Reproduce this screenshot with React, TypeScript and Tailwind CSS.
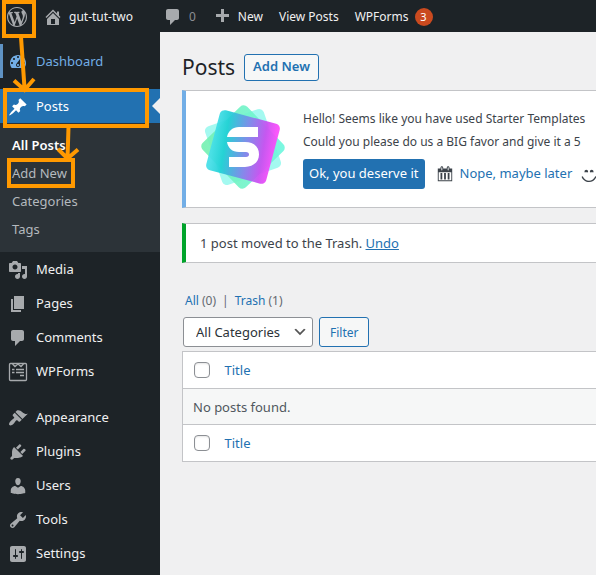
import type { ReactNode } from "react";

const paths = {
  wordpress:
    "M20 10c0-5.51-4.49-10-10-10C4.48 0 0 4.49 0 10c0 5.52 4.48 10 10 10 5.51 0 10-4.48 10-10zM7.78 15.37L4.37 6.22c.55-.02 1.17-.08 1.17-.08.5-.06.44-1.13-.06-1.11 0 0-1.45.11-2.37.11-.18 0-.37 0-.58-.01C4.12 2.69 6.87 1.11 10 1.11c2.33 0 4.45.87 6.05 2.34-.68-.11-1.65.39-1.65 1.58 0 .74.45 1.36.9 2.1.35.61.55 1.36.55 2.46 0 1.49-1.4 5-1.4 5l-3.03-8.37c.54-.02.82-.17.82-.17.5-.05.44-1.25-.06-1.22 0 0-1.44.12-2.38.12-.87 0-2.33-.12-2.33-.12-.5-.03-.56 1.2-.06 1.22l.92.08 1.26 3.41zM17.41 10c.24-.64.74-1.87.43-4.25.7 1.29 1.05 2.71 1.05 4.25 0 3.29-1.73 6.24-4.4 7.78.97-2.59 1.94-5.2 2.92-7.78zM6.1 18.09C3.12 16.65 1.11 13.53 1.11 10c0-1.3.23-2.48.72-3.59C3.25 10.3 4.67 14.2 6.1 18.09zm4.03-6.63l2.58 6.98c-.86.29-1.76.45-2.71.45-.79 0-1.57-.11-2.29-.33.81-2.38 1.62-4.74 2.42-7.1z",
  home: "M16 8.5l1.53 1.53-1.06 1.06L10 4.6l-6.47 6.49-1.06-1.06L10 2.5l4 4v-2h2v4zm-6-2.46l6 5.99V18H4v-5.97zM12 17v-5H8v5h4z",
  comments:
    "M5 2h9c1.1 0 2 .9 2 2v7c0 1.1-.9 2-2 2h-2l-5 5v-5H5c-1.1 0-2-.9-2-2V4c0-1.1.9-2 2-2z",
  plus: "M17 7v3h-5v5H9v-5H4V7h5V2h3v5h5z",
  dashboard:
    "M3.76 16h12.48c1.1-1.37 1.76-3.11 1.76-5 0-4.42-3.58-8-8-8s-8 3.58-8 8c0 1.89.66 3.63 1.76 5zM10 4c.55 0 1 .45 1 1s-.45 1-1 1-1-.45-1-1 .45-1 1-1zM6 6c.55 0 1 .45 1 1s-.45 1-1 1-1-.45-1-1 .45-1 1-1zm8 0c.55 0 1 .45 1 1s-.45 1-1 1-1-.45-1-1 .45-1 1-1zm-5.37 5.55L12 7v6c0 1.1-.9 2-2 2s-2-.9-2-2c0-.57.24-1.08.63-1.45zM4 10c.55 0 1 .45 1 1s-.45 1-1 1-1-.45-1-1 .45-1 1-1zm12 0c.55 0 1 .45 1 1s-.45 1-1 1-1-.45-1-1 .45-1 1-1zm-5 3c0-.55-.45-1-1-1s-1 .45-1 1 .45 1 1 1 1-.45 1-1z",
  post: "M10.44 3.02l1.82-1.82 6.36 6.35-1.83 1.82c-1.05-.68-2.48-.57-3.41.36l-.75.75c-.92.93-1.04 2.35-.35 3.41l-1.83 1.82-2.41-2.41-2.8 2.79c-.42.42-3.38 2.71-3.8 2.29s1.86-3.39 2.28-3.81l2.79-2.79L4.1 9.36l1.83-1.82c1.05.69 2.48.57 3.4-.36l.75-.75c.93-.92 1.05-2.35.36-3.41z",
  media:
    "M13 11V4c0-.55-.45-1-1-1h-1.67L9 1H5L3.67 3H2c-.55 0-1 .45-1 1v7c0 .55.45 1 1 1h10c.55 0 1-.45 1-1zM7 4.5c1.38 0 2.5 1.12 2.5 2.5S8.38 9.5 7 9.5 4.5 8.38 4.5 7 5.62 4.5 7 4.5zM14 6h5v10.5c0 1.38-1.12 2.5-2.5 2.5S14 17.88 14 16.5s1.12-2.5 2.5-2.5c.17 0 .34.02.5.05V9h-3V6zm-4 8.05V13h2v3.5c0 1.38-1.12 2.5-2.5 2.5S7 17.88 7 16.5 8.12 14 9.5 14c.17 0 .34.02.5.05z",
  page: "M6 15V2h10v13H6zm-1 1h8v2H3V5h2v11z",
  appearance:
    "M14.48 11.06L7.41 3.99l1.5-1.5c.5-.56 2.3-.47 3.51.32 1.21.8 1.43 1.28 2.91 2.1 1.18.64 2.45 1.26 4.45.85zm-.71.71L6.7 4.7 4.93 6.47c-.39.39-.39 1.02 0 1.41l1.06 1.06c.39.39.39 1.03 0 1.42-.6.6-1.43 1.11-2.21 1.69-.35.26-.7.53-1.01.84C1.43 14.23.4 16.08 1.4 17.07c.99 1 2.84-.03 4.18-1.36.31-.31.58-.66.85-1.02.57-.78 1.08-1.61 1.69-2.21.39-.39 1.02-.39 1.41 0l1.06 1.06c.39.39 1.02.39 1.41 0z",
  plugins:
    "M13.11 4.36L9.87 7.6 8 5.73l3.24-3.24c.35-.34 1.05-.2 1.56.32.52.51.66 1.21.31 1.55zm-8 1.77l.91-1.12 9.01 9.01-1.19.84c-.71.71-2.63 1.16-3.82 1.16H6.14L4.9 17.26c-.59.59-1.54.59-2.12 0-.59-.58-.59-1.53 0-2.12l1.24-1.24v-3.88c0-1.13.4-3.19 1.09-3.89zm7.26 3.97l3.24-3.24c.34-.35 1.04-.21 1.55.31.52.51.66 1.21.31 1.55l-3.24 3.25z",
  users:
    "M10 9.25c-2.27 0-2.73-3.44-2.73-3.44C7 4.02 7.82 2 9.97 2c2.16 0 2.98 2.02 2.71 3.81 0 0-.41 3.44-2.68 3.44zm0 2.57L12.72 10c2.39 0 4.52 2.33 4.52 4.53v2.49s-3.65 1.13-7.24 1.13c-3.65 0-7.24-1.13-7.24-1.13v-2.49c0-2.25 1.94-4.48 4.47-4.48z",
  tools:
    "M16.68 9.77c-1.34 1.34-3.3 1.67-4.95.99l-5.41 6.52c-.99.99-2.59.99-3.58 0s-.99-2.59 0-3.57l6.52-5.42c-.68-1.65-.35-3.61.99-4.95 1.28-1.28 3.12-1.62 4.72-1.06l-2.89 2.89 2.82 2.82 2.86-2.87c.53 1.58.18 3.39-1.08 4.65zM3.81 16.21c.4.39 1.04.39 1.43 0 .4-.4.4-1.04 0-1.43-.39-.4-1.03-.4-1.43 0-.39.39-.39 1.03 0 1.43z",
  settings:
    "M18 16V4c0-1.1-.9-2-2-2H4c-1.1 0-2 .9-2 2v12c0 1.1.9 2 2 2h12c1.1 0 2-.9 2-2zM8 11h1c.55 0 1 .45 1 1s-.45 1-1 1H8v1.5c0 .28-.22.5-.5.5s-.5-.22-.5-.5V13H6c-.55 0-1-.45-1-1s.45-1 1-1h1V5.5c0-.28.22-.5.5-.5s.5.22.5.5V11zm5-2h-1c-.55 0-1-.45-1-1s.45-1 1-1h1V5.5c0-.28.22-.5.5-.5s.5.22.5.5V7h1c.55 0 1 .45 1 1s-.45 1-1 1h-1v5.5c0 .28-.22.5-.5.5s-.5-.22-.5-.5V9z",
  calendar:
    "M15 4h3v14H2V4h3V3c0-.83.67-1.5 1.5-1.5S8 2.17 8 3v1h4V3c0-.83.67-1.5 1.5-1.5S15 2.17 15 3v1zM6 3v2.5c0 .28.22.5.5.5s.5-.22.5-.5V3c0-.28-.22-.5-.5-.5S6 2.72 6 3zm7 0v2.5c0 .28.22.5.5.5s.5-.22.5-.5V3c0-.28-.22-.5-.5-.5s-.5.22-.5.5zm4 14V8H3v9h14zM7 16V9H5v7h2zm4 0V9H9v7h2zm4 0V9h-2v7h2z",
  smiley:
    "M7 5.2c1.1 0 2 .89 2 2 0 .37-.11.71-.28 1C8.72 8.2 8 8 7 8s-1.72.2-1.72.2c-.17-.29-.28-.63-.28-1 0-1.11.9-2 2-2zm6 0c1.11 0 2 .89 2 2 0 .37-.11.71-.28 1 0 0-.72-.2-1.72-.2s-1.72.2-1.72.2c-.17-.29-.28-.63-.28-1 0-1.11.89-2 2-2zm-3 13.7c3.72 0 7.03-2.36 8.23-5.88l-1.32-.46C15.9 15.52 13.12 17.5 10 17.5s-5.9-1.98-6.91-4.94l-1.32.46c1.2 3.52 4.51 5.88 8.23 5.88z",
};

type IconName = keyof typeof paths;

function Icon({ name, className = "size-5" }: { name: IconName; className?: string }) {
  return (
    <svg viewBox="0 0 20 20" className={`shrink-0 ${className}`} fill="currentColor" fillRule="evenodd" aria-hidden="true">
      <path d={paths[name]} />
    </svg>
  );
}

function FormsIcon() {
  return (
    <svg viewBox="0 0 20 20" className="size-5 shrink-0" fill="none" stroke="currentColor" aria-hidden="true">
      <rect x="1.5" y="1.5" width="17" height="17" rx="1" strokeWidth="1.3" />
      <path d="M4.5 2 7 4.5 10 2l3 2.5L15.5 2" strokeWidth="1.3" />
      <path d="M4 7.5h2.5M8 7.5h8M4 10.5h2.5M8 10.5h8M12 13.5h4" strokeWidth="1.4" />
    </svg>
  );
}

function MenuItem({ icon, label }: { icon: ReactNode; label: string }) {
  return (
    <a href="#" className="flex h-[34px] items-center gap-2 pt-[2px] pl-2 text-[#f0f0f1]">
      <span className="text-[#a7aaad]">{icon}</span>
      {label}
    </a>
  );
}

function AdminBar() {
  return (
    <header className="flex h-8 items-center overflow-hidden bg-[#1d2327] pt-[2px] pl-[7px] text-[12px] whitespace-nowrap text-[#f0f0f1]">
      <a href="#" aria-label="About WordPress" className="text-[#a7aaad]">
        <Icon name="wordpress" />
      </a>
      <a href="#" className="ml-4 flex items-center gap-[6px]">
        <Icon name="home" className="size-5 text-[#a7aaad]" />
        gut-tut-two
      </a>
      <a href="#" className="ml-[30px] flex items-center gap-[6px] text-[#8c8f94]">
        <Icon name="comments" className="size-5 text-[#a7aaad]" />0
      </a>
      <a href="#" className="ml-4 flex items-center gap-[6px]">
        <Icon name="plus" className="size-5 text-[#a7aaad]" />
        New
      </a>
      <a href="#" className="ml-4">View Posts</a>
      <a href="#" className="ml-4 flex items-center gap-[6px]">
        WPForms
        <span className="flex size-[18px] items-center justify-center rounded-full bg-[#ca4a1f] text-[11px] text-white">3</span>
      </a>
    </header>
  );
}

function Sidebar() {
  return (
    <nav aria-label="Main menu" className="w-40 shrink-0 bg-[#1d2327] pt-3 text-[13px]">
      <a href="#" className="flex h-[34px] items-center gap-2 pt-[2px] pl-2 text-[#72aee6] shadow-[inset_3px_0_0_#5f93c4]">
        <Icon name="dashboard" />
        Dashboard
      </a>
      <a href="#" className="relative mt-[11px] flex h-[34px] items-center gap-2 bg-[#2271b1] pt-[2px] pl-2 text-white">
        <Icon name="post" />
        Posts
        <span className="absolute top-[9px] right-0 border-y-8 border-r-8 border-y-transparent border-r-[#f0f0f1]" />
      </a>
      <ul className="bg-[#2c3338] pt-2 pb-[9px] leading-7 text-[#b4b9be]">
        <li className="pl-3 font-semibold text-white"><a href="#">All Posts</a></li>
        <li className="pl-3"><a href="#">Add New</a></li>
        <li className="pl-3"><a href="#">Categories</a></li>
        <li className="pl-3"><a href="#">Tags</a></li>
      </ul>
      <MenuItem icon={<Icon name="media" />} label="Media" />
      <MenuItem icon={<Icon name="page" />} label="Pages" />
      <MenuItem icon={<Icon name="comments" />} label="Comments" />
      <MenuItem icon={<FormsIcon />} label="WPForms" />
      <div className="h-3" />
      <MenuItem icon={<Icon name="appearance" />} label="Appearance" />
      <MenuItem icon={<Icon name="plugins" />} label="Plugins" />
      <MenuItem icon={<Icon name="users" />} label="Users" />
      <MenuItem icon={<Icon name="tools" />} label="Tools" />
      <MenuItem icon={<Icon name="settings" />} label="Settings" />
    </nav>
  );
}

function StarterLogo() {
  return (
    <svg viewBox="0 0 84 84" className="size-[84px] shrink-0" role="img" aria-label="Starter Templates">
      <defs>
        <linearGradient id="front" x1="0" y1="0.5" x2="1" y2="0.4">
          <stop offset="0" stopColor="#46dfe8" />
          <stop offset="0.2" stopColor="#1fd0d6" />
          <stop offset="0.55" stopColor="#8383ec" />
          <stop offset="0.82" stopColor="#cb4cf2" />
          <stop offset="1" stopColor="#fb4bfb" />
        </linearGradient>
        <linearGradient id="back" x1="0" y1="1" x2="1" y2="0">
          <stop offset="0" stopColor="#74f0ae" />
          <stop offset="1" stopColor="#6cf7e0" />
        </linearGradient>
      </defs>
      <rect x="11" y="11" width="62" height="62" rx="5" fill="#7df7ea" opacity="0.7" transform="rotate(-19 42 42)" />
      <rect x="11" y="11" width="62" height="62" rx="5" fill="url(#back)" opacity="0.9" transform="rotate(46 42 42)" />
      <rect x="11" y="11" width="62" height="62" rx="5" fill="url(#front)" opacity="0.93" transform="rotate(15 42 42)" />
      <path d="M57 22H38c-6 0-11 4-12 10h31z" fill="#fff" />
      <path d="M26 37h18c9 0 14 5 14 12.500S52 62 44 62H28V52h17c4 0 4-5 0-5h-7c-7 0-11-4-12-10z" fill="#fff" />
    </svg>
  );
}

function TitleRow({ label }: { label: string }) {
  return (
    <tr className="h-[37px] bg-white">
      <td className="w-8 pl-[11px]">
        <input
          type="checkbox"
          aria-label={label}
          className="block size-4 appearance-none rounded-[4px] border border-[#8c8f94] bg-white shadow-[inset_0_1px_2px_rgba(0,0,0,0.1)]"
        />
      </td>
      <th scope="col" className="pt-[2px] pl-[10px] text-left font-normal">
        <a href="#" className="text-[#2271b1]">Title</a>
      </th>
    </tr>
  );
}

function Content() {
  return (
    <main className="min-w-0 flex-1 overflow-hidden bg-[#f0f0f1] pt-5 pl-[22px] text-[13px] text-[#3c434a]">
      <div className="flex items-center gap-[9px]">
        <h1 className="text-[21px] leading-[30px] text-[#1d2327]">Posts</h1>
        <button className="h-[27px] rounded-[3px] border border-[#2271b1] bg-[#f6f7f7] px-2 font-semibold text-[#2271b1]">
          Add New
        </button>
      </div>

      <section className="mt-2 flex h-[118px] items-start border border-r-0 border-l-4 border-[#c3c4c7] border-l-[#72aee6] bg-white pt-[14px] pl-[15px] whitespace-nowrap">
        <StarterLogo />
        <div className="ml-[18px] pt-[2px]">
          <p className="text-[12px] leading-[23px]">Hello! Seems like you have used Starter Templates</p>
          <p className="text-[12px] leading-[23px]">Could you please do us a BIG favor and give it a 5</p>
          <div className="mt-[6px] flex items-center">
            <button className="h-[30px] rounded-[3px] bg-[#2271b1] px-[6px] text-white">Ok, you deserve it</button>
            <Icon name="calendar" className="ml-[11px] size-[18px]" />
            <a href="#" className="ml-[6px] text-[#2271b1]">Nope, maybe later</a>
            <Icon name="smiley" className="ml-2 size-[18px]" />
          </div>
        </div>
      </section>

      <section className="mt-[15px] flex h-10 items-center border border-r-0 border-l-4 border-[#c3c4c7] border-l-[#00a32a] bg-white pt-[2px] pl-[14px]">
        <p>
          1 post moved to the Trash. <a href="#" className="text-[#2271b1] underline">Undo</a>
        </p>
      </section>

      <div className="mt-7 flex gap-[6px] pl-[3px] text-[12px] leading-5 text-[#646970]">
        <span><a href="#" className="text-[#2271b1]">All</a> (0)</span>
        <span>|</span>
        <span><a href="#" className="text-[#2271b1]">Trash</a> (1)</span>
      </div>

      <div className="mt-[6px] flex gap-[6px] pl-px">
        <div className="relative">
          <select
            aria-label="Filter by category"
            className="h-[30px] w-[130px] appearance-none rounded-[3px] border border-[#8c8f94] bg-white pt-[2px] pl-3 text-[13px] text-[#2c3338]"
          >
            <option>All Categories</option>
          </select>
          <svg viewBox="0 0 20 20" className="pointer-events-none absolute top-[7px] right-[5px] size-4" fill="#555" aria-hidden="true">
            <path d="M5 6l5 5 5-5 2 1-7 7-7-7 2-1z" />
          </svg>
        </div>
        <button className="h-[30px] rounded-[3px] border border-[#2271b1] bg-[#f6f7f7] px-[10px] pt-[2px] text-[12px] text-[#2271b1]">Filter</button>
      </div>

      <table className="mt-1 w-full border-collapse border border-r-0 border-[#c3c4c7]">
        <thead>
          <TitleRow label="Select all posts" />
        </thead>
        <tbody>
          <tr className="h-[36px] border-y border-[#c3c4c7] bg-[#f6f7f7]">
            <td colSpan={2} className="pt-[2px] pl-[10px] text-[#50575e]">No posts found.</td>
          </tr>
        </tbody>
        <tfoot>
          <TitleRow label="Select all posts below" />
        </tfoot>
      </table>
    </main>
  );
}

function TutorialMarks() {
  return (
    <svg
      className="pointer-events-none absolute top-0 left-0 h-[200px] w-[160px]"
      viewBox="0 0 160 200"
      fill="none"
      stroke="#ff9900"
      strokeWidth="4"
      aria-hidden="true"
    >
      <rect x="4" y="2" width="30" height="34" />
      <rect x="5" y="90" width="142" height="36" />
      <rect x="9" y="160" width="64" height="26" />
      <path d="M21 37l3.500 51M14 80.500l10.500 9.500 9.500-11" />
      <path d="M68.500 127l-1 32M58 149l9.500 9.500L78 149.500" />
    </svg>
  );
}

export default function App() {
  return (
    <div className="relative flex min-h-screen flex-col font-['Noto_Sans',sans-serif]">
      <AdminBar />
      <div className="flex flex-1">
        <Sidebar />
        <Content />
      </div>
      <TutorialMarks />
    </div>
  );
}
